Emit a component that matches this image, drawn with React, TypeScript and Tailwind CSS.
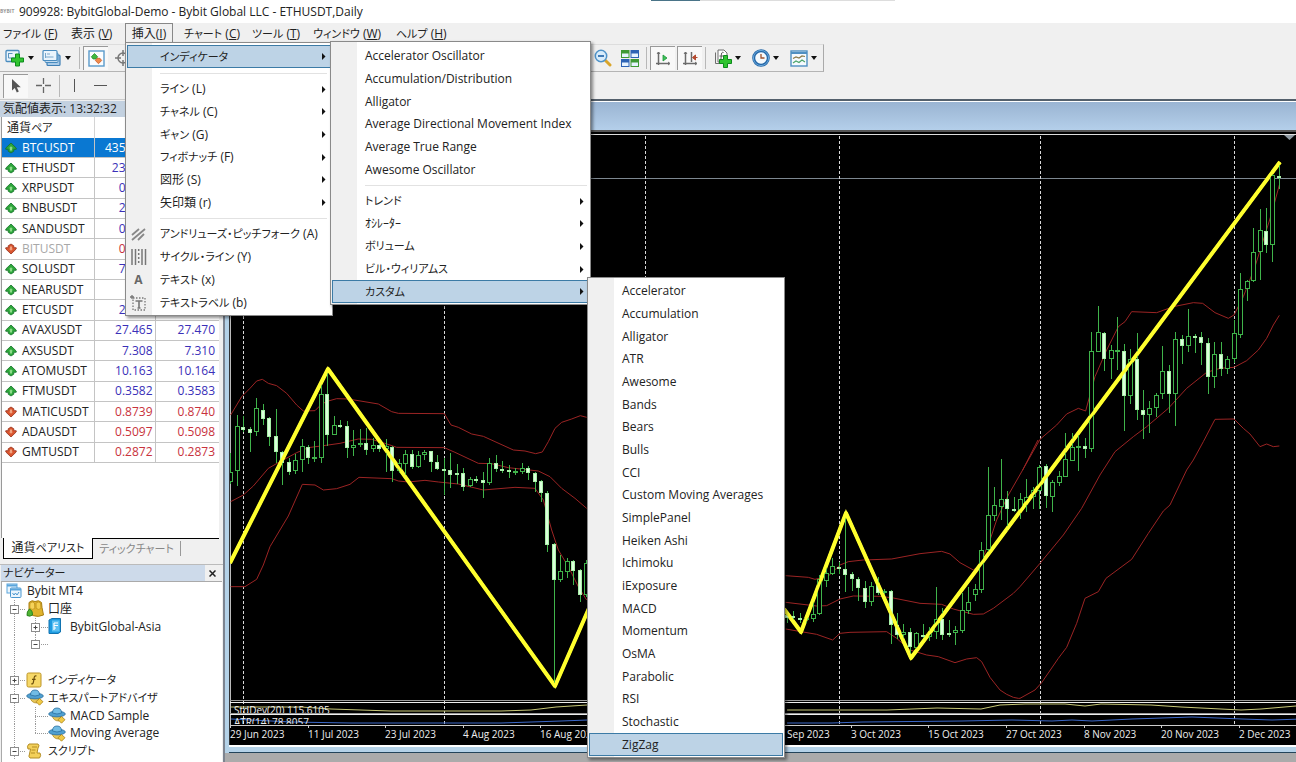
import React from "react";

/* ---------- text ---------- */

// Kana runs are set a little smaller than the Latin text, with proportional metrics.
function Jp({ children }: { children: string }) {
  const parts = children.split(/([\u3040-\u30ff]+)/);
  return (
    <>
      {parts.map((p, i) =>
        /^[\u3040-\u30ff]/.test(p) ? (
          <span key={i} className="text-[11px] [font-feature-settings:'palt']">
            {p}
          </span>
        ) : (
          <React.Fragment key={i}>{p}</React.Fragment>
        )
      )}
    </>
  );
}

/* ---------- small icons ---------- */

const Caret = () => (
  <svg className="h-[4px] w-[6px] shrink-0" viewBox="0 0 7 4" preserveAspectRatio="none">
    <path d="M0 0h7L3.5 4z" fill="#111" />
  </svg>
);

const SubArrow = () => (
  <svg className="h-[7px] w-[4px] shrink-0" viewBox="0 0 4 7">
    <path d="M0 0v7l3.500-3.500z" fill="#111" />
  </svg>
);

const PlusShape = ({ x, y }: { x: number; y: number }) => (
  <path
    transform={`translate(${x} ${y})`}
    d="M4 0h4v4h4v4H8v4H4V8H0V4h4z"
    fill="#2fc42f"
    stroke="#0d8a1c"
    strokeWidth="1"
  />
);

const NewChartIcon = () => (
  <svg className="h-[18px] w-[20px]" viewBox="0 0 20 18">
    <rect x="1" y="1.5" width="13" height="11" rx="1" fill="#eaf4fc" stroke="#4a8cbf" strokeWidth="1.3" />
    <path d="M3.5 4v5M3.5 9h6M3.5 4.5h4" stroke="#5b93bd" fill="none" />
    <PlusShape x={6.5} y={5} />
  </svg>
);

const ProfilesIcon = () => (
  <svg className="h-[18px] w-[20px]" viewBox="0 0 20 18">
    <rect x="5" y="6" width="13" height="10.500" rx="1" fill="#a9cbe8" stroke="#3f7fb5" strokeWidth="1.2" />
    <rect x="3" y="4" width="13" height="9.5" rx="1" fill="#c5dcf0" stroke="#4a8cbf" />
    <rect x="1" y="1.5" width="14" height="10" rx="1" fill="#eaf4fc" stroke="#4a8cbf" strokeWidth="1.2" />
    <path d="M3.5 4v5M3.5 8h8M5 5h3" stroke="#7aa8cc" fill="none" />
  </svg>
);

const MarketIcon = () => (
  <svg className="h-[17px] w-[17px]" viewBox="0 0 17 17">
    <rect x="1" y="1" width="15" height="15" fill="#fbfdff" stroke="#5a9acb" strokeWidth="1.4" />
    <path d="M6.500 3.500l3.200 3.200-1.700 2.300h-3L3.300 6.700z" fill="#3fb83f" stroke="#1d8a26" strokeWidth=".7" />
    <path d="M10.5 13.700L7.300 10.500 9 8.300h3l1.700 2.200z" fill="#f08b4a" stroke="#c4501e" strokeWidth=".7" />
  </svg>
);

const TargetIcon = () => (
  <svg className="h-[18px] w-[18px]" viewBox="0 0 18 18" fill="none" stroke="#777" strokeWidth="1.5">
    <circle cx="9" cy="9" r="5" />
    <path d="M9 1v6M9 11v6M1 9h6M11 9h6" />
  </svg>
);

const ZoomOutIcon = () => (
  <svg className="h-[18px] w-[18px]" viewBox="0 0 18 18">
    <path d="M11 11l5 5" stroke="#d9a52b" strokeWidth="3" strokeLinecap="round" />
    <circle cx="7" cy="7" r="5.7" fill="#d8ecfb" stroke="#4f93c9" strokeWidth="1.5" />
    <path d="M4 7h6" stroke="#2f6fae" strokeWidth="1.8" />
  </svg>
);

const TileIcon = () => (
  <svg className="h-[17px] w-[18px]" viewBox="0 0 18 17">
    <rect x="0" y="0" width="8.5" height="8" fill="#3f9a35" />
    <rect x="9.5" y="0" width="8.5" height="8" fill="#2d63b5" />
    <rect x="0" y="9" width="8.5" height="8" fill="#2d63b5" />
    <rect x="9.5" y="9" width="8.5" height="8" fill="#3f9a35" />
    <path d="M1 3.500h6.500v3.500H1zM10.500 3.500h6.500v3.500h-6.500zM1 12.500h6.500v3.500H1zM10.500 12.500h6.500v3.500h-6.500z" fill="#e6f3ff" />
  </svg>
);

const AutoScrollIcon = () => (
  <svg className="h-[16px] w-[16px]" viewBox="0 0 16 16">
    <path d="M3.500 1v13M1 12.500h13.500" stroke="#6b6b6b" strokeWidth="1.500" />
    <path d="M2 3l1.500-2L5 3M13 11l2 1.500L13 14" stroke="#6b6b6b" fill="none" />
    <path d="M8 4v6l4-3z" fill="#3fc25a" stroke="#1b9436" strokeWidth=".8" />
  </svg>
);

const ShiftIcon = () => (
  <svg className="h-[16px] w-[16px]" viewBox="0 0 16 16">
    <path d="M3.500 1v13M1 12.500h13.500M9.500 1v10" stroke="#6b6b6b" strokeWidth="1.500" />
    <path d="M2 3l1.500-2L5 3M13 11l2 1.500L13 14" stroke="#6b6b6b" fill="none" />
    <path d="M15.500 6.500h-4M13.500 4l-3 2.500 3 2.500z" stroke="#b4492e" fill="#b4492e" />
  </svg>
);

const IndicatorAddIcon = () => (
  <svg className="h-[19px] w-[18px]" viewBox="0 0 18 19">
    <path d="M4 1h6l3 3v9H4z" fill="#fff" stroke="#6f6f6f" />
    <path d="M1.500 3.500v11h8" fill="none" stroke="#6f6f6f" />
    <path d="M9.500 3.500c-2-.8-2 1-2.200 3l-.4 4M5.500 7h4" fill="none" stroke="#555" />
    <PlusShape x={5.500} y={6.500} />
  </svg>
);

const ClockIcon = () => (
  <svg className="h-[18px] w-[18px]" viewBox="0 0 18 18">
    <circle cx="9" cy="9" r="7.300" fill="#f4f9fd" stroke="#2467a8" strokeWidth="3" />
    <circle cx="9" cy="9" r="7.600" fill="none" stroke="#6aa9dc" strokeWidth="1" />
    <path d="M9 5v4h3.500" fill="none" stroke="#a0522d" strokeWidth="1.300" />
  </svg>
);

const TemplateIcon = () => (
  <svg className="h-[17px] w-[18px]" viewBox="0 0 18 17">
    <rect x="1" y="1" width="16" height="15" fill="#f6fafe" stroke="#4f8fc2" strokeWidth="1.400" />
    <path d="M1 3h16" stroke="#4f8fc2" strokeWidth="2" />
    <path d="M3 8.500l3-1.500 3 1 3-2 3 .5" fill="none" stroke="#8a7a4a" strokeWidth="1.200" />
    <path d="M3 13l3-2 3 1.500 3-2.500 3 2" fill="none" stroke="#4ca56a" strokeWidth="1.200" />
  </svg>
);

const PointerIcon = () => (
  <svg className="h-[16px] w-[11px]" viewBox="0 0 11 16">
    <path d="M1 1v11.500l2.800-2.600 2 4.600 2-.9-2-4.400H9.800z" fill="#555" />
  </svg>
);

const CrossIcon = () => (
  <svg className="h-[17px] w-[17px]" viewBox="0 0 17 17" stroke="#666" strokeWidth="1.300">
    <path d="M8.500 1v6M8.500 10v6M1 8.500h6M10 8.500h6" />
  </svg>
);

const UpIcon = () => (
  <svg className="h-[12px] w-[12px] shrink-0" viewBox="0 0 12 12">
    <path d="M6 1l5.200 5v1.300H8.800v1.900L6 11 3.200 9.200V7.300H.8V6z" fill="#2da63a" stroke="#14702a" strokeWidth=".8" />
    <path d="M6 4.200l2 2.100H7v2.200H5V6.300H4z" fill="#8ddb8a" />
  </svg>
);

const DownIcon = () => (
  <svg className="h-[12px] w-[12px] shrink-0" viewBox="0 0 12 12">
    <path d="M6 11L.8 6V4.700h2.400V2.800L6 1l2.800 1.800v1.900h2.400V6z" fill="#d9552f" stroke="#96301a" strokeWidth=".8" />
    <path d="M6 7.800L4 5.700h1V3.500h2v2.200h1z" fill="#f2a582" />
  </svg>
);

/* ---------- market watch ---------- */

// Bid values under the open menu are kept to the leading digits that stay visible.
type Quote = [string, string, string, "up" | "down"];
const quotes: Quote[] = [
  ["BTCUSDT", "435", "", "up"],
  ["ETHUSDT", "23", "", "up"],
  ["XRPUSDT", "0", "", "up"],
  ["BNBUSDT", "2", "", "up"],
  ["SANDUSDT", "0", "", "up"],
  ["BITUSDT", "0", "", "down"],
  ["SOLUSDT", "7", "", "up"],
  ["NEARUSDT", "", "", "up"],
  ["ETCUSDT", "2", "", "up"],
  ["AVAXUSDT", "27.465", "27.470", "up"],
  ["AXSUSDT", "7.308", "7.310", "up"],
  ["ATOMUSDT", "10.163", "10.164", "up"],
  ["FTMUSDT", "0.3582", "0.3583", "up"],
  ["MATICUSDT", "0.8739", "0.8740", "down"],
  ["ADAUSDT", "0.5097", "0.5098", "down"],
  ["GMTUSDT", "0.2872", "0.2873", "down"],
];

function MarketWatch() {
  return (
    <section className="flex min-h-0 flex-1 flex-col">
      <h2 className="h-[16px] bg-[#c3d1e0] pl-[3px] text-[12px] leading-[15px]">
        <Jp>気配値表示: 13:32:32</Jp>
      </h2>
      <div className="mr-[4px] ml-px flex-1 border-l border-[#999] bg-white">
        <table className="h-[346px] w-full table-fixed border-collapse text-[12px] leading-[14px]">
          <colgroup>
            <col className="w-[92px]" />
            <col className="w-[61px]" />
            <col />
          </colgroup>
          <thead>
            <tr className="h-[21px] text-left">
              <th className="border-r border-[#d4d4d4] pl-[5px] font-normal">
                <Jp>通貨ペア</Jp>
              </th>
              <th className="border-r border-[#d4d4d4]" />
              <th />
            </tr>
          </thead>
          <tbody>
            {quotes.map(([name, bid, ask, dir], i) => {
              const sel = i === 0;
              const tone = sel ? "text-white" : dir === "up" ? "text-[#3a30b8]" : "text-[#c8323c]";
              return (
                <tr key={name} className={sel ? "bg-[#0a78d2] text-white" : ""}>
                  <td className="border-r border-b border-[#c4c4c4] p-0">
                    <div className="flex items-center gap-[5px] pl-[3px]">
                      {dir === "up" ? <UpIcon /> : <DownIcon />}
                      <span className={name === "BITUSDT" ? "text-[#a8a8a8]" : ""}>{name}</span>
                    </div>
                  </td>
                  <td
                    className={`border-r border-b border-[#c4c4c4] p-0 ${ask ? "pr-[2px]" : "pr-[29px]"} text-right ${tone}`}
                  >
                    {bid}
                  </td>
                  <td className={`border-b border-[#c4c4c4] p-0 pr-[4px] text-right ${tone}`}>{ask}</td>
                </tr>
              );
            })}
          </tbody>
        </table>
      </div>
      <div className="mr-[4px] flex h-[21px] shrink-0 pl-[3px] text-[12px] leading-[18px]">
        <button className="w-[90px] border-r border-b border-l border-black bg-white">
          <Jp>通貨ペアリスト</Jp>
        </button>
        <div className="flex flex-1 items-start border-t border-black">
          <button className="mt-[2px] h-[15px] w-[88px] border-r border-[#999] leading-[14px] text-[#888]">
            <Jp>ティックチャート</Jp>
          </button>
        </div>
      </div>
      <div className="h-[6px] shrink-0 border-b border-[#bbb]" />
    </section>
  );
}

/* ---------- navigator ---------- */

const TerminalIcon = () => (
  <svg className="h-[16px] w-[16px]" viewBox="0 0 16 16">
    <rect x="1" y="1" width="10" height="9" fill="#eaf5fd" stroke="#5aa5dc" />
    <path d="M1 2.500h10" stroke="#5aa5dc" strokeWidth="2" />
    <rect x="4.500" y="5" width="10.500" height="9.500" rx="1" fill="#eaf5fd" stroke="#4b97d0" />
    <path d="M4.500 6.500h10.500" stroke="#5aa5dc" strokeWidth="2" />
    <path d="M6.500 10l1.500 2 1.500-2 1.500 2 2-3" fill="none" stroke="#4b97d0" />
  </svg>
);
const AccountsIcon = () => (
  <svg className="h-[17px] w-[18px]" viewBox="0 0 18 17">
    <path d="M3 2.500Q6-.5 9 1.500q4-2 6.500 1l.5 5 1.500 7.500q-5 2.500-11 .5L3 10z" fill="#e0b32c" stroke="#a87e12" />
    <path d="M4 3q2.500-2 4.500 0l.3 5.500Q6 10.500 3.800 8z" fill="#f6d35a" stroke="#b98c18" strokeWidth=".7" />
    <path d="M10 3q2.500-2 4.500 0l.4 5.500q-2.500 2-4.700-.2z" fill="#f3cd4e" stroke="#b98c18" strokeWidth=".7" />
    <path d="M1 15.500q-.5-4 2.500-6.500 3.500 1.500 3 6-2.500 2-5.500.5z" fill="#4fb534" stroke="#2c8220" />
  </svg>
);
const ServerIcon = () => (
  <svg className="h-[17px] w-[13px]" viewBox="0 0 13 17">
    <path d="M1 2l3-1.500h8.500v13.500L10 15.500H1z" fill="#1e9be0" stroke="#1173b0" />
    <path d="M4 2.500h7.500v11H4z" fill="#5cc0f2" />
    <path d="M6 5h4M6 7.500h4M6 10h2M6 5v7" stroke="#fff" strokeWidth="1.200" />
  </svg>
);
const FunctionIcon = () => (
  <svg className="h-[16px] w-[16px]" viewBox="0 0 16 16">
    <rect x="1" y="1" width="14" height="14" rx="1.500" fill="#f6d868" stroke="#bd9426" />
    <path d="M10.500 4c-2-.6-2.300 1-2.500 3l-.6 3.200c-.3 1.500-1 2-2.200 1.600M6 7.300h3.600" fill="none" stroke="#6b4e0c" strokeWidth="1.200" />
  </svg>
);
const ExpertIcon = () => (
  <svg className="h-[17px] w-[18px]" viewBox="0 0 18 17">
    <path d="M4 8q1 6 7 6l3-6z" fill="#e8c65a" stroke="#b18c22" strokeWidth=".8" />
    <ellipse cx="9" cy="7" rx="8.300" ry="2.900" fill="#4f9fd0" stroke="#2a6f9e" strokeWidth=".8" />
    <path d="M4.500 6q0-5 4.500-5t4.500 5q-4.500 2-9 0z" fill="#72bce4" stroke="#2a6f9e" strokeWidth=".8" />
    <path d="M13.500 9.500l3.500 3.200-3.500 3.500-3.500-3.500z" fill="#f2cb46" stroke="#a8821a" strokeWidth=".8" />
  </svg>
);
const ScriptIcon = () => (
  <svg className="h-[16px] w-[16px]" viewBox="0 0 16 16">
    <path d="M3 1h9q2 1.500 0 4l-1 5h3q1.500 2.500-.5 5H4q-2-1.500-.5-4l1-5H2q-1.500-3 1-5z" fill="#f3d05a" stroke="#b38d25" />
    <path d="M6 4h5M5.500 7h4M5 10h4" stroke="#b38d25" />
  </svg>
);

type Node = { label: string; depth: 0 | 1 | 2; box?: "+" | "-"; icon?: React.ReactNode; through?: boolean };
const tree: Node[] = [
  { label: "口座", depth: 0, box: "-", icon: <AccountsIcon /> },
  { label: "BybitGlobal-Asia", depth: 1, box: "+", icon: <ServerIcon />, through: true },
  { label: "", depth: 1, box: "-" },
  { label: "", depth: 2 },
  { label: "インディケータ", depth: 0, box: "+", icon: <FunctionIcon /> },
  { label: "エキスパートアドバイザ", depth: 0, box: "-", icon: <ExpertIcon /> },
  { label: "MACD Sample", depth: 1, icon: <ExpertIcon />, through: true },
  { label: "Moving Average", depth: 1, icon: <ExpertIcon /> },
  { label: "スクリプト", depth: 0, box: "-", icon: <ScriptIcon /> },
];

function Guide({ node }: { node: Node }) {
  const x = node.depth === 0 ? 12 : 33;
  const w = node.depth === 0 ? 24 : 46;
  return (
    <svg className="h-[18px] shrink-0" width={w} height={18} viewBox={`0 0 ${w} 18`}>
      <g stroke="#999" strokeDasharray="1 1" fill="none">
        <path d="M12.500 0v18" />
        {node.depth === 1 && <path d={`M33.500 0v${node.through ? 18 : 9}`} />}
        {node.depth < 2 && <path d={`M${x} 9.500h${w - x}`} />}
      </g>
      {node.box && (
        <g stroke="#8c8c8c">
          <rect x={x - 3.500} y="5.500" width="8" height="8" fill="#fff" />
          <path d={`M${x - 1.500} 9.500h4`} stroke="#444" />
          {node.box === "+" && <path d={`M${x + 0.500} 7.500v4`} stroke="#444" />}
        </g>
      )}
    </svg>
  );
}

function Navigator() {
  return (
    <section className="shrink-0">
      <div className="mr-[4px] ml-px flex h-[16px] items-center text-[12px]">
        <h2 className="flex-1 bg-[#cddaea] pl-[2px] leading-[16px]">
          <Jp>ナビゲーター</Jp>
        </h2>
        <button aria-label="閉じる" className="flex w-[14px] justify-center">
          <svg className="h-[7px] w-[7px]" viewBox="0 0 7 7" stroke="#222" strokeWidth="1.500">
            <path d="M.5.5l6 6M6.500.5l-6 6" />
          </svg>
        </button>
      </div>
      <ul className="mr-px ml-px grid h-[181px] auto-rows-fr border-t border-l border-[#aaa] bg-white pb-[2px] text-[12px] leading-[18px]">
        <li className="flex items-center gap-[5px] pl-[4px]">
          <TerminalIcon />
          Bybit MT4
        </li>
        {tree.map((n, i) => (
          <li key={i} className="flex items-center">
            <Guide node={n} />
            {n.icon && <span className="flex w-[22px] shrink-0">{n.icon}</span>}
            <span>
              <Jp>{n.label}</Jp>
            </span>
          </li>
        ))}
      </ul>
    </section>
  );
}

/* ---------- chart ---------- */

// One row per day: high, low, body top, body bottom, filled.
type Candle = [number, number, number, number, 0 | 1];
const summer: Candle[] = [
  [453, 484, 472, 482, 0], [415, 486, 426, 471, 0], [416, 432, 427, 430, 1], [427, 452, 429, 433, 1],
  [398, 436, 408, 432, 0], [404, 425, 410, 419, 1], [417, 446, 418, 437, 1], [409, 463, 436, 452, 1],
  [451, 485, 452, 463, 1], [458, 475, 462, 472, 1], [454, 474, 460, 471, 0], [439, 472, 446, 460, 0],
  [445, 464, 447, 458, 1], [441, 462, 457, 459, 0], [380, 463, 394, 458, 0], [369, 446, 394, 435, 1],
  [416, 435, 425, 435, 0], [420, 428, 425, 427, 1], [421, 458, 426, 448, 1], [430, 456, 445, 448, 0],
  [429, 447, 443, 445, 0], [428, 455, 443, 450, 1], [438, 452, 445, 449, 0], [440, 452, 445, 449, 1],
  [439, 472, 446, 449, 0], [446, 482, 447, 471, 1], [459, 473, 463, 471, 0], [450, 475, 454, 464, 0],
  [450, 469, 454, 467, 1], [451, 468, 455, 467, 0], [450, 460, 452, 455, 0], [451, 472, 451, 462, 1],
  [455, 470, 462, 469, 1], [458, 495, 469, 470, 1], [453, 488, 470, 475, 1], [464, 484, 473, 474, 1],
  [468, 491, 473, 487, 1], [477, 487, 479, 486, 0], [476, 483, 479, 480, 1], [472, 498, 480, 483, 1],
  [458, 485, 463, 483, 0], [455, 472, 463, 469, 1], [461, 473, 469, 470, 1], [465, 478, 470, 472, 1],
  [468, 475, 471, 473, 0], [463, 474, 468, 472, 0], [466, 480, 468, 473, 1], [472, 492, 473, 482, 1],
  [480, 502, 481, 493, 1], [491, 552, 493, 545, 1], [543, 688, 544, 580, 1], [555, 582, 571, 580, 0],
  [558, 578, 561, 572, 0], [560, 585, 561, 571, 1], [569, 602, 570, 595, 1], [560, 597, 563, 595, 0],
];
const autumn: Candle[] = [
  [612, 623, 615, 618, 1], [611, 622, 616, 617, 1], [613, 623, 618, 620, 1], [615, 623, 618, 620, 0],
  [600, 622, 614, 619, 0], [575, 615, 579, 614, 0], [562, 587, 573, 581, 0], [558, 575, 566, 574, 0],
  [562, 574, 567, 569, 1], [515, 592, 569, 575, 1], [572, 591, 574, 579, 1], [577, 601, 579, 588, 1],
  [581, 608, 588, 602, 1], [582, 606, 586, 602, 0], [577, 595, 585, 593, 1], [589, 594, 591, 593, 0],
  [590, 644, 591, 625, 1], [613, 639, 625, 635, 1], [624, 640, 632, 635, 0], [628, 656, 632, 647, 1],
  [632, 649, 633, 648, 0], [624, 638, 635, 637, 1], [627, 641, 633, 637, 0], [587, 639, 619, 632, 0],
  [608, 640, 619, 635, 1], [620, 637, 633, 635, 1], [626, 645, 630, 633, 0], [593, 633, 610, 631, 0],
  [587, 614, 602, 611, 0], [584, 601, 589, 595, 0], [542, 593, 550, 590, 0], [467, 555, 515, 550, 0],
  [487, 521, 505, 516, 0], [459, 520, 499, 507, 0], [491, 531, 499, 509, 1], [497, 512, 509, 510, 1],
  [493, 519, 499, 510, 0], [479, 512, 497, 502, 0], [487, 509, 490, 497, 0], [465, 509, 467, 491, 0],
  [464, 508, 466, 496, 1], [480, 512, 482, 497, 0], [471, 486, 476, 483, 0], [433, 477, 459, 477, 0],
  [433, 461, 447, 461, 0], [435, 471, 446, 447, 0], [438, 458, 446, 449, 1], [332, 452, 351, 449, 0],
  [306, 352, 332, 352, 0], [332, 371, 333, 359, 1], [345, 379, 350, 359, 0], [317, 370, 350, 352, 0],
  [344, 431, 351, 396, 1], [349, 404, 359, 396, 0], [333, 420, 359, 410, 1], [390, 439, 410, 415, 1],
  [401, 433, 408, 415, 0], [393, 417, 395, 408, 0], [346, 399, 371, 394, 0], [365, 413, 371, 394, 1],
  [332, 426, 339, 394, 0], [335, 364, 339, 346, 1], [309, 352, 336, 346, 0], [334, 353, 336, 337, 1],
  [332, 365, 337, 343, 1], [338, 394, 343, 377, 1], [342, 388, 354, 377, 0], [342, 376, 354, 369, 1],
  [356, 374, 359, 369, 0], [320, 363, 333, 359, 0], [273, 338, 289, 335, 0], [280, 301, 281, 289, 0],
  [228, 282, 252, 281, 0], [209, 280, 230, 252, 0], [208, 253, 231, 245, 1], [170, 262, 175, 245, 0],
  [162, 189, 176, 178, 1],
];

function Candles({ data, first }: { data: Candle[]; first: number }) {
  return (
    <g>
      {data.map(([hi, lo, top, bottom, filled], k) => {
        const x = Math.round(230.300 + (first + k) * 6.473);
        return (
          <g key={k} stroke="#3fb34a">
            <path d={`M${x + 0.500} ${hi}V${lo}`} />
            <rect
              x={x - 1.500}
              y={top + 0.500}
              width={filled ? 3 : 4}
              height={Math.max(1, bottom - top - 1)}
              fill={filled ? "#dcffdc" : "#000"}
              stroke={filled ? "#a8f0a8" : "#3fb34a"}
            />
          </g>
        );
      })}
    </g>
  );
}

// Axis labels sit every 12 days; slots 5 and 6 are under the open menu.
const axisLabels: [number, string][] = [
  [0, "29 Jun 2023"], [1, "11 Jul 2023"], [2, "23 Jul 2023"], [3, "4 Aug 2023"], [4, "16 Aug 2023"],
  [7, "21 Sep 2023"], [8, "3 Oct 2023"], [9, "15 Oct 2023"], [10, "27 Oct 2023"], [11, "8 Nov 2023"],
  [12, "20 Nov 2023"], [13, "2 Dec 2023"],
];
const monthLines = [243.500, 444.500, 645.500, 839.500, 1040.500, 1234.500];

function Chart() {
  return (
    <svg
      className="min-h-0 w-full flex-1 bg-black"
      viewBox="230 133 1066 612"
      preserveAspectRatio="xMinYMin meet"
      role="img"
      aria-label="ETHUSDT Daily"
    >
      <defs>
        <clipPath id="pane1"><rect x="230" y="704" width="1066" height="9" /></clipPath>
        <clipPath id="pane2"><rect x="230" y="716" width="1066" height="8" /></clipPath>
      </defs>
      <path d="M230 134.500h1066" stroke="#ddd" />
      <path d="M230.500 134v592" stroke="#bbb" />
      <path d="M230 178.500h1066" stroke="#7d8790" />
      <g stroke="#d8d8d8" strokeDasharray="3 2">
        {monthLines.map((x) => (
          <path key={x} d={`M${x} 136V724`} />
        ))}
      </g>
      <path d="M1284 135h11l-5.500 5z" fill="#8f9aa3" />

      <g fill="none" stroke="#9c2424" strokeWidth="1">
        <g transform="translate(225 300) scale(.33333)" strokeWidth="3">
          <polyline points="17,345 50,290 75,265 95,243 112,238 130,250 155,257 185,280 215,315 235,333 270,332 290,312 310,303 335,296 370,297 460,312 500,335 520,340 658,341 678,375 700,382 740,402 775,409 865,450 900,453 932,461 952,456 970,425 990,385 1010,367 1040,357 1066,347 1085,352" />
          <polyline points="17,605 55,585 85,558 130,505 165,485 215,458 250,443 310,435 345,430 400,417 440,418 480,430 515,442 658,443 690,457 760,490 800,491 850,503 940,513 975,530 1010,565 1050,595 1085,625" />
          <polyline points="17,860 60,860 95,838 115,795 135,740 190,648 232,553 270,555 295,570 335,566 375,553 402,532 500,536 520,543 550,546 600,541 640,546 700,552 775,570 870,562 930,565 955,600 980,690 1000,750 1030,800 1060,860 1085,900" />
        </g>
        <g transform="translate(760 440) scale(.33333)" strokeWidth="3">
          <polyline points="77,407 145,412 165,418 205,408 240,375 265,365 310,360 395,357 480,341 545,334 570,342 600,368 640,390 660,375 690,300 710,240 745,165 788,90 834,0" />
          <polyline points="77,487 170,498 200,497 240,477 280,468 360,469 400,474 480,490 545,493 580,507 640,523 670,522 700,505 760,460 780,440" />
          <polyline points="77,567 170,583 218,600 240,580 270,577 380,575 410,595 450,630 500,645 535,650 585,668 620,657 650,653 665,665 690,712 720,750 740,763 760,772 775,775 780,775" />
        </g>
        <g transform="translate(1020 440) scale(.33333)" strokeWidth="3">
          <polyline points="0,440 60,370 130,285 185,205 240,105 285,35 340,-10 380,-40" />
          <polyline points="0,775 45,750 65,728 115,655 140,622 170,550 195,475 235,455 258,415 335,358 385,280 430,213 450,195 500,90 520,60" />
        </g>
        <g transform="translate(930 90) scale(.33333)" strokeWidth="3">
          <polyline points="278,1140 330,1048 380,1005 410,972 445,955 467,963 480,915 495,860 530,780 565,710 585,695 605,665 680,668 730,650 790,638 818,640 855,668 895,685 912,675 940,620 975,530 1000,450 1025,370 1048,285" />
          <polyline points="650,1010 715,955 770,895 830,847 870,835 912,832 950,812 985,780 1010,745 1030,705 1048,676" />
          <polyline points="790,1110 820,1055 855,988 912,987 940,1015 960,1032 990,1070 1010,1062 1030,1070 1048,1068" />
        </g>
      </g>

      <g fill="none" stroke="#ffff2e" strokeWidth="4" strokeLinejoin="round">
        <path d="M230 563L328 369L555 686L600 583" />
        <path d="M784 609L801 632L846 513L911 658L1280 162" />
      </g>

      <g fill="none">
        <path d="M230 700.500h1066M230 713.500h1066" stroke="#999" strokeWidth="1" />
        <path d="M230 702.500h1066M230 714.500h1066" stroke="#eee" />
        <path d="M230 725.500h1066" stroke="#ccc" />
        <path
          d="M231 707h70l30 2 60 2h110l30-1 25-3 31-2M787 710h100l50-2 44 1 19-4 25-1 40 0 20 2 16-2 50 1 30 2 60 3 20-1 35-3"
          stroke="#c8c878"
        />
        <path
          d="M231 719l60 3 60 1h150l60-2 27-1M787 723l45 0 30-1 100-1 50-1 40 1 20-1 20 1 40-2 60-2 50 2 30 1 30-1 15 0"
          stroke="#3c68c8"
        />
      </g>

      <Candles data={summer} first={0} />
      <Candles data={autumn} first={86} />

      <g fill="none" stroke="#ffff2e" strokeWidth="3">
        <path d="M230 563L328 369L555 686L600 583" />
        <path d="M784 609L801 632L846 513L911 658L1280 162" />
      </g>

      <g fill="#eee" fontSize="10" fontFamily="'Open Sans', 'Noto Sans', sans-serif">
        <text x="234" y="714" clipPath="url(#pane1)">StdDev(20) 115.6105</text>
        <text x="234" y="726" clipPath="url(#pane2)">ATR(14) 78.8057</text>
        {axisLabels.map(([slot, t]) => {
          const x = Math.round(230 + slot * 77.600);
          return (
            <g key={t}>
              <path d={`M${x + 0.500} 726v2`} stroke="#ccc" />
              <text x={x} y="738">{t}</text>
            </g>
          );
        })}
      </g>
    </svg>
  );
}

/* ---------- menus ---------- */

function MenuItem({ label, sub, active, icon }: { label: string; sub?: boolean; active?: boolean; icon?: React.ReactNode }) {
  return (
    <button
      role="menuitem"
      className={`flex w-full items-center border pr-[4px] text-left ${
        active ? "border-[#3c7ba6] bg-[#bdd3e6]" : "border-transparent"
      }`}
    >
      <span className="flex w-[32px] shrink-0 items-center pl-[2px]">{icon}</span>
      <span className="flex-1 whitespace-nowrap">
        <Jp>{label}</Jp>
      </span>
      {sub && <SubArrow />}
    </button>
  );
}

const menuBox =
  "absolute z-10 border border-[#8a8a8a] bg-[linear-gradient(to_right,#f0f0f0_26px,#ffffff_26px)] p-px text-[12px] leading-[18px] text-[#222] shadow-[2px_2px_3px_rgba(0,0,0,0.45)]";

const PitchforkIcon = () => (
  <svg className="h-[15px] w-[17px]" viewBox="0 0 17 15" stroke="#888" strokeWidth="1.800">
    <path d="M2 8l7-6M2 13L15 2M8 13l6-6" />
  </svg>
);
const CycleIcon = () => (
  <svg className="h-[16px] w-[17px]" viewBox="0 0 17 16" stroke="#777" strokeWidth="1.500">
    <path d="M2 0v16M5.500 0v16M12 0v16M15.500 0v16" />
    <path d="M8.700 0v16" strokeDasharray="2 2" />
  </svg>
);
const LetterIcon = () => <span className="w-[17px] text-center font-bold text-[#666]">A</span>;
const LabelIcon = () => (
  <svg className="h-[16px] w-[17px]" viewBox="0 0 17 16" fill="none" stroke="#777" strokeWidth="1.300">
    <rect x="3" y="3" width="12" height="12" strokeDasharray="1.500 1.500" />
    <path d="M5.500 6h7M9 6v7M7.500 13h3" strokeWidth="1.600" />
    <path d="M0 2h4M2 0v4" />
  </svg>
);

function InsertMenu() {
  return (
    <div role="menu" className={`${menuBox} top-[42px] left-[125px] w-[208px]`}>
      <div className="mt-px grid h-[23px]">
        <MenuItem label="インディケータ" sub active />
      </div>
      <hr className="mt-[5px] mb-[4px] mr-[4px] ml-[33px] border-[#e2e2e2]" />
      <div className="grid h-[136px] auto-rows-fr">
        <MenuItem label="ライン (L)" sub />
        <MenuItem label="チャネル (C)" sub />
        <MenuItem label="ギャン (G)" sub />
        <MenuItem label="フィボナッチ (F)" sub />
        <MenuItem label="図形 (S)" sub />
        <MenuItem label="矢印類 (r)" sub />
      </div>
      <hr className="my-[4px] mr-[4px] ml-[33px] border-[#e2e2e2]" />
      <div className="grid h-[91px] auto-rows-fr">
        <MenuItem label="アンドリューズ・ピッチフォーク (A)" icon={<PitchforkIcon />} />
        <MenuItem label="サイクル・ライン (Y)" icon={<CycleIcon />} />
        <MenuItem label="テキスト (x)" icon={<LetterIcon />} />
        <MenuItem label="テキストラベル (b)" icon={<LabelIcon />} />
      </div>
    </div>
  );
}

function IndicatorMenu() {
  return (
    <div role="menu" className={`${menuBox} top-[41px] left-[330px] w-[261px]`}>
      <div className="mt-[2px] grid h-[136px] auto-rows-fr">
        <MenuItem label="Accelerator Oscillator" />
        <MenuItem label="Accumulation/Distribution" />
        <MenuItem label="Alligator" />
        <MenuItem label="Average Directional Movement Index" />
        <MenuItem label="Average True Range" />
        <MenuItem label="Awesome Oscillator" />
      </div>
      <hr className="my-[4px] mr-[2px] ml-[33px] border-[#e2e2e2]" />
      <div className="grid h-[113px] auto-rows-fr">
        <MenuItem label="トレンド" sub />
        <MenuItem label="ｵｼﾚｰﾀｰ" sub />
        <MenuItem label="ボリューム" sub />
        <MenuItem label="ビル・ウィリアムス" sub />
        <MenuItem label="カスタム" sub active />
      </div>
    </div>
  );
}

const custom = [
  "Accelerator", "Accumulation", "Alligator", "ATR", "Awesome", "Bands", "Bears", "Bulls", "CCI",
  "Custom Moving Averages", "SimplePanel", "Heiken Ashi", "Ichimoku", "iExposure", "MACD", "Momentum",
  "OsMA", "Parabolic", "RSI", "Stochastic", "ZigZag",
];

function CustomMenu() {
  return (
    <div role="menu" className={`${menuBox} top-[277px] left-[587px] w-[198px]`}>
      <div className="mt-px grid h-[476px] auto-rows-fr">
        {custom.map((c) => (
          <MenuItem key={c} label={c} active={c === "ZigZag"} />
        ))}
      </div>
    </div>
  );
}

/* ---------- bars ---------- */

function MenuBarItem({ text, k, width, open }: { text: string; k: string; width: string; open?: boolean }) {
  return (
    <button
      className={`flex h-[21px] items-center whitespace-nowrap ${width} ${
        open ? "justify-center border border-b-0 border-[#888]" : "pl-[3px]"
      }`}
    >
      <span>
        <Jp>{text}</Jp>(<u>{k}</u>)
      </span>
    </button>
  );
}

const Sep = () => <span className="h-[22px] w-px bg-[#b8b8b8]" />;

function ToolButton({ label, pressed, children }: { label: string; pressed?: boolean; children: React.ReactNode }) {
  return (
    <button
      aria-label={label}
      className={`flex h-[24px] shrink-0 items-center justify-center gap-[3px] ${
        pressed ? "w-[25px] border-t border-l border-[#999] bg-[#f8f8f8]" : ""
      }`}
    >
      {children}
    </button>
  );
}

export default function App() {
  return (
    <div className="relative flex h-screen flex-col overflow-hidden bg-[#f0f0f0] font-['Open_Sans','Noto_Sans_CJK_JP',sans-serif] text-[12px] text-[#222]">
      <header className="flex h-[23px] shrink-0 items-center bg-white">
        <span className="w-[19px] text-[5px] font-bold text-[#999]">BYBIT</span>
        <h1 className="text-[12px]">909928: BybitGlobal-Demo - Bybit Global LLC - ETHUSDT,Daily</h1>
      </header>
      <div className="absolute top-0 left-[651px] flex h-px w-[244px] bg-[#ddd]">
        <span className="w-[49px] bg-[#4a7488]" />
      </div>

      <nav className="flex h-[21px] shrink-0 items-start">
        <MenuBarItem text="ファイル " k="F" width="w-[68px]" />
        <MenuBarItem text="表示 " k="V" width="w-[57px]" />
        <MenuBarItem text="挿入" k="I" width="w-[48px]" open />
        <span className="w-[8px]" />
        <MenuBarItem text="チャート " k="C" width="w-[68px]" />
        <MenuBarItem text="ツール " k="T" width="w-[61px]" />
        <MenuBarItem text="ウィンドウ " k="W" width="w-[83px]" />
        <MenuBarItem text="ヘルプ " k="H" width="w-[60px]" />
      </nav>

      <div className="flex h-[28px] w-[824px] shrink-0 items-center border-t border-r border-b border-t-[#ddd] border-r-[#aaa] border-b-[#b4b4b4] pr-[6px] pl-[5px]">
        <div className="flex items-center gap-[8px]">
          <ToolButton label="新規チャート"><NewChartIcon /><Caret /></ToolButton>
          <ToolButton label="プロファイル"><ProfilesIcon /><Caret /></ToolButton>
          <Sep />
        </div>
        <div className="flex items-center gap-[6px] pl-[3px]">
          <ToolButton label="気配値" pressed><MarketIcon /></ToolButton>
          <ToolButton label="データ"><TargetIcon /></ToolButton>
        </div>
        <div className="ml-auto flex items-center">
          <div className="flex items-center gap-[9px] pr-[7px]">
            <ToolButton label="縮小"><ZoomOutIcon /></ToolButton>
            <ToolButton label="整列"><TileIcon /></ToolButton>
          </div>
          <Sep />
          <div className="flex items-center gap-[2px] px-[3px]">
            <ToolButton label="自動スクロール" pressed><AutoScrollIcon /></ToolButton>
            <ToolButton label="チャートシフト" pressed><ShiftIcon /></ToolButton>
          </div>
          <Sep />
          <div className="flex items-center gap-[11px] pl-[8px]">
            <ToolButton label="インディケータ追加"><IndicatorAddIcon /><Caret /></ToolButton>
            <ToolButton label="時間足"><ClockIcon /><Caret /></ToolButton>
            <ToolButton label="定型"><TemplateIcon /><Caret /></ToolButton>
          </div>
        </div>
      </div>

      <div className="flex h-[27px] shrink-0 items-center gap-[7px] pl-[3px]">
        <ToolButton label="カーソル" pressed><PointerIcon /></ToolButton>
        <ToolButton label="クロスヘア"><CrossIcon /></ToolButton>
        <Sep />
        <ToolButton label="垂直線"><span className="mx-[7px] h-[13px] w-px bg-[#555]" /></ToolButton>
        <ToolButton label="水平線"><span className="ml-[5px] h-px w-[13px] bg-[#555]" /></ToolButton>
      </div>

      <div className="flex min-h-0 flex-1">
        <aside className="flex w-[223px] shrink-0 flex-col border-t border-[#ccc] pt-px">
          <MarketWatch />
          <Navigator />
        </aside>
        <main className="flex min-w-0 flex-1 flex-col border-t-2 border-l-2 border-t-[#54606c] border-l-[#7c8490] bg-[#ababab]">
          <div className="flex min-h-0 flex-1 flex-col bg-[#b4d2e8] pl-[4px]">
            <div className="-ml-[4px] h-[29px] shrink-0 border-t border-white bg-linear-to-b from-[#9ab4d2] to-[#b4cfea]" />
            <div className="h-[3px] shrink-0 border-t-2 border-[#555] bg-black" />
            <div className="flex min-h-0 flex-1 flex-col border-l border-[#333]">
              <Chart />
            </div>
            <div className="h-[8px] shrink-0 border-t-2 border-b border-t-white border-b-[#23445a]" />
          </div>
          <div className="h-[9px] shrink-0" />
        </main>
      </div>

      <InsertMenu />
      <IndicatorMenu />
      <CustomMenu />
    </div>
  );
}
